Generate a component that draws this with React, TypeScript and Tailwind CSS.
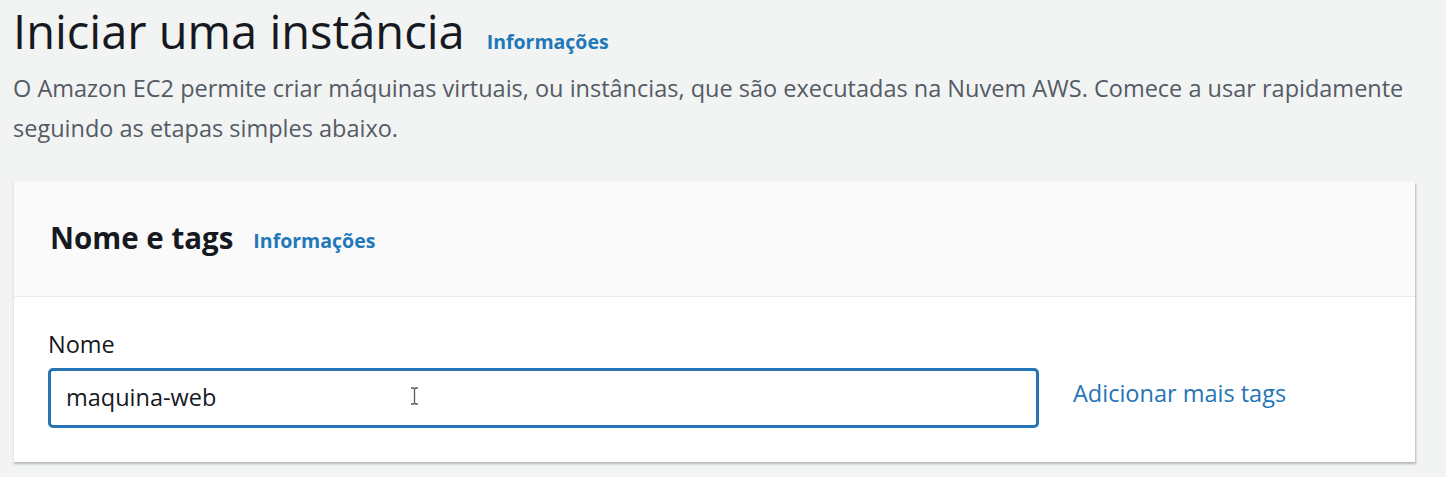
import type { FC } from "react";

const FONT = "font-['Open_Sans','Noto_Sans',sans-serif]";

const InfoLink: FC<{ className?: string }> = ({ className = "" }) => (
  <a className={`font-bold text-[#1f78b8] ${className}`}>Informações</a>
);

const IBeam: FC = () => (
  <svg width="9" height="18" viewBox="0 0 9 18" className="absolute left-[359px] top-[16px]">
    <path d="M1 1h2.5l1 1 1-1H8M4.5 2v14M1 17h2.5l1-1 1 1H8" fill="none" stroke="#5a5a5a" strokeWidth="1.3" />
  </svg>
);

const App: FC = () => {
  return (
    <div className={`min-h-[477px] bg-[#f2f3f3] ${FONT} overflow-hidden`}>
      {/* cabeçalho da página */}
      <div className="pl-[13px] pr-[20px]">
        <div className="flex items-baseline gap-[22px]">
          <h1 className="text-[47px] leading-[62px] font-normal text-[#16191f]">
            Iniciar uma instância
          </h1>
          <InfoLink className="text-[19.5px]" />
        </div>
        <p className="mt-[6px] text-[23.5px] leading-[40px] text-[#545b64] whitespace-nowrap">
          O Amazon EC2 permite criar máquinas virtuais, ou instâncias, que são executadas na Nuvem AWS. Comece a usar rapidamente
          <br />
          seguindo as etapas simples abaixo.
        </p>
      </div>

      {/* cartão Nome e tags */}
      <section className="mt-[34px] ml-[13px] w-[1402px] bg-white shadow-[1px_2px_2px_rgba(0,0,0,0.25)] border-l border-[#e4e6e6]">
        <header className="h-[115px] bg-[#fafafa] border-b border-[#eaeded] flex items-center pl-[36px] gap-[20px] pb-[2px]">
          <h2 className="text-[29.5px] font-bold text-[#16191f]">Nome e tags</h2>
          <InfoLink className="text-[19.5px] mt-[5px]" />
        </header>
        <div className="pl-[34px] pt-[32px] pb-[34px]">
          <label className="block text-[23.5px] leading-[30px] text-[#16191f] mb-[9px]">Nome</label>
          <div className="flex items-center">
            <div className="relative w-[991px] h-[60px] rounded-[5px] border-[3px] border-[#2574b5] bg-white flex items-center pl-[15px]">
              <span className="text-[23.5px] text-[#16191f]">maquina-web</span>
              <IBeam />
            </div>
            <a className="ml-[34px] text-[23.5px] text-[#2574b5] -mt-[8px]">Adicionar mais tags</a>
          </div>
        </div>
      </section>
    </div>
  );
};

export default App;
